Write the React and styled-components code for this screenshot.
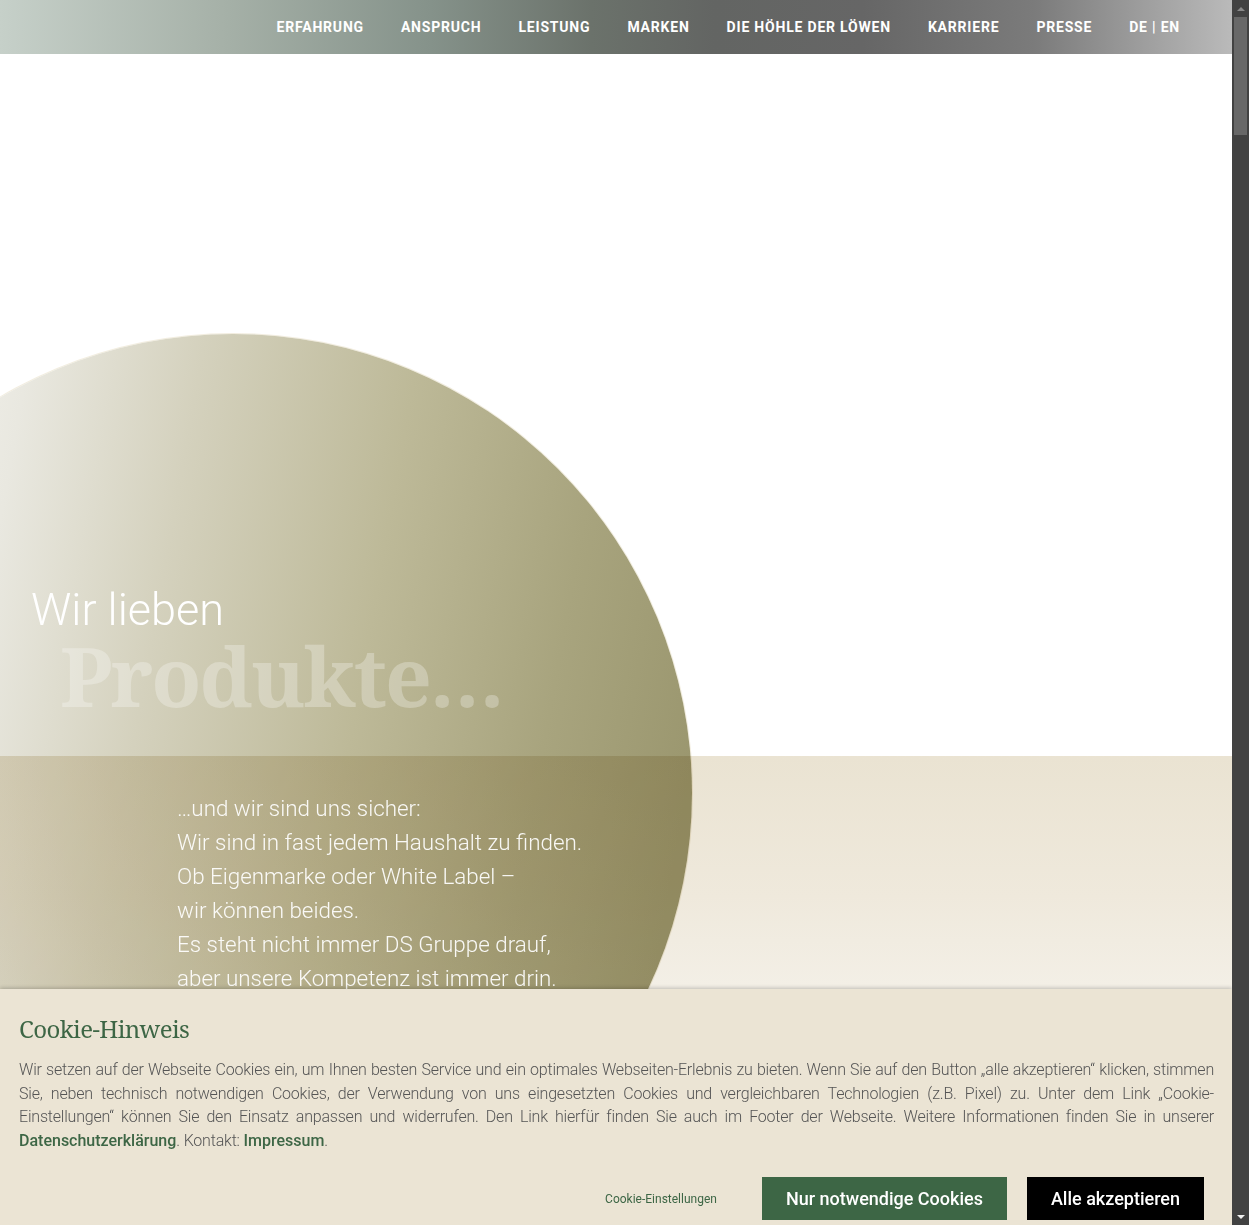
import React from 'react'
import styled, { createGlobalStyle } from 'styled-components'

const navItems = ['Erfahrung', 'Anspruch', 'Leistung', 'Marken', 'Die Höhle der Löwen', 'Karriere', 'Presse', 'DE | EN']

const claimLines = [
    '…und wir sind uns sicher:',
    'Wir sind in fast jedem Haushalt zu finden.',
    'Ob Eigenmarke oder White Label –',
    'wir können beides.',
    'Es steht nicht immer DS Gruppe drauf,',
    'aber unsere Kompetenz ist immer drin.',
]

const green = '#3d6645'
const railWidth = '17px'

const GlobalStyle = createGlobalStyle`
    body {
        margin: 0;
        background: #fff;
        font-family: Roboto, 'Liberation Sans', sans-serif;
    }
`

// Top bar with the grey-green fade
const TopBar = styled.header`
    position: fixed;
    top: 0;
    left: 0;
    right: ${ railWidth };
    height: 54px;
    z-index: 10;
    display: flex;
    align-items: center;
    justify-content: flex-end;
    gap: 37px;
    padding-right: 52px;
    background: linear-gradient(90deg, #c6d0c9 0%, #a6b1a8 18%, #85928a 35%, #6b726b 48%, #636563 58%, #666666 70%, #7b7b7b 84%, #bababa 100%);
`

const NavLink = styled.a`
    color: #fff;
    font-size: 14px;
    font-weight: 700;
    letter-spacing: 0.8px;
    text-transform: ${ props => props.plain ? 'none' : 'uppercase' };
    text-decoration: none;
`

// dark scroll rail on the right edge of the window
const Rail = styled.div`
    position: fixed;
    top: 0;
    right: 0;
    bottom: 0;
    width: ${ railWidth };
    z-index: 30;
    display: flex;
    flex-direction: column;
    align-items: center;
    background: #424242;
`

const RailArrow = styled.div`
    height: 17px;
    width: 100%;
    display: flex;
    align-items: center;
    justify-content: center;
    &::after {
        content: '';
        border-left: 4px solid transparent;
        border-right: 4px solid transparent;
        border-${ props => props.down ? 'top' : 'bottom' }: 4px solid ${ props => props.down ? '#f0f0f0' : '#8a8a8a' };
    }
`

const RailThumb = styled.div`
    width: 13px;
    height: 118px;
    background: #686868;
`

const RailTrack = styled.div`
    flex: 1;
`

const Stage = styled.main`
    position: relative;
    overflow: hidden;
    margin-right: ${ railWidth };
`

// big faded disc behind the claim
const Disc = styled.div`
    position: absolute;
    left: -226px;
    top: 334px;
    width: 918px;
    height: 918px;
    border-radius: 50%;
    background: linear-gradient(100deg, #f3f2ed 14%, #e9e8e0 24%, #d4d1bd 40%, #bdb998 60%, #a8a47e 78%, #9b976f 92%);
    box-shadow: 0 0 0 1px rgba(236, 230, 210, 0.7);
`

const Intro = styled.section`
    position: relative;
    height: 756px;
    box-sizing: border-box;
    display: flex;
    flex-direction: column;
    justify-content: flex-end;
    padding: 0 0 45px 31px;
`

const Lead = styled.h2`
    margin: 0 0 9px;
    color: #fff;
    font-size: 45px;
    font-weight: 300;
    line-height: 40px;
`

const Big = styled.h1`
    margin: 0 0 0 29px;
    color: rgba(255, 255, 255, 0.28);
    font-family: 'Noto Serif', 'DejaVu Serif', serif;
    font-size: 82px;
    font-weight: 700;
    letter-spacing: -2px;
    line-height: 72px;
`

// beige band; its tint is multiplied onto the disc
const Claim = styled.section`
    position: relative;
    min-height: 700px;
    padding: 35px 0 0 177px;
    &::before {
        content: '';
        position: absolute;
        inset: 0;
        background: linear-gradient(180deg, #eae3d2 0px, #efe9dc 140px, #f3efe6 230px, #f7f4ee 500px);
        mix-blend-mode: multiply;
    }
`

const ClaimText = styled.div`
    position: relative;
`

const ClaimLine = styled.p`
    margin: 0;
    color: rgba(255, 255, 255, 0.93);
    font-size: 22.4px;
    font-weight: 300;
    line-height: 34px;
`

const CookieBanner = styled.aside`
    position: fixed;
    left: 0;
    right: ${ railWidth };
    bottom: 0;
    height: 236px;
    z-index: 20;
    box-sizing: border-box;
    padding: 23px 18px 0 19px;
    background: #ebe4d4;
    box-shadow: 0 -1px 4px rgba(0, 0, 0, 0.22);
`

const CookieTitle = styled.h3`
    margin: 0 0 12px;
    color: ${ green };
    font-family: 'Noto Serif', 'DejaVu Serif', serif;
    font-size: 24px;
    font-weight: 400;
    letter-spacing: -0.6px;
    line-height: 34px;
`

const CookieText = styled.p`
    margin: 0;
    color: #555;
    font-size: 16px;
    font-weight: 300;
    letter-spacing: -0.2px;
    line-height: 23.6px;
    text-align: justify;
`

const TextLink = styled.a`
    color: ${ green };
    font-weight: 500;
    letter-spacing: 0;
    text-decoration: none;
`

const Actions = styled.div`
    display: flex;
    align-items: center;
    justify-content: flex-end;
    gap: 20px;
    margin-top: 25px;
    padding-right: 10px;
`

const SettingsLink = styled.a`
    margin-right: 25px;
    color: ${ green };
    font-size: 12px;
    font-weight: 400;
`

const Button = styled.button`
    height: 43px;
    padding: 0 24px;
    border: 0;
    background: ${ props => props.dark ? '#000' : green };
    color: #fff;
    font-family: Roboto, 'Liberation Sans', sans-serif;
    font-size: 18px;
    font-weight: 500;
`

const App = () => (
    <>
        <GlobalStyle />
        <TopBar>
            { navItems.map(item => <NavLink key={ item } href="#" plain={ item === 'DE | EN' }>{ item }</NavLink>) }
        </TopBar>

        <Stage>
            <Disc />
            <Intro>
                <Lead>Wir lieben</Lead>
                <Big>Produkte…</Big>
            </Intro>
            <Claim>
                <ClaimText>
                    { claimLines.map(line => <ClaimLine key={ line }>{ line }</ClaimLine>) }
                </ClaimText>
            </Claim>
        </Stage>

        <CookieBanner>
            <CookieTitle>Cookie-Hinweis</CookieTitle>
            <CookieText>
                Wir setzen auf der Webseite Cookies ein, um Ihnen besten Service und ein optimales Webseiten-Erlebnis zu bieten. Wenn Sie auf den Button „alle akzeptieren“ klicken, stimmen Sie, neben technisch notwendigen Cookies, der Verwendung von uns eingesetzten Cookies und vergleichbaren Technologien (z.B. Pixel) zu. Unter dem Link „Cookie-Einstellungen“ können Sie den Einsatz anpassen und widerrufen. Den Link hierfür finden Sie auch im Footer der Webseite. Weitere Informationen finden Sie in unserer <TextLink href="#">Datenschutzerklärung</TextLink>. Kontakt: <TextLink href="#">Impressum</TextLink>.
            </CookieText>
            <Actions>
                <SettingsLink>Cookie-Einstellungen</SettingsLink>
                <Button>Nur notwendige Cookies</Button>
                <Button dark>Alle akzeptieren</Button>
            </Actions>
        </CookieBanner>

        <Rail>
            <RailArrow />
            <RailThumb />
            <RailTrack />
            <RailArrow down />
        </Rail>
    </>
)

export default App
